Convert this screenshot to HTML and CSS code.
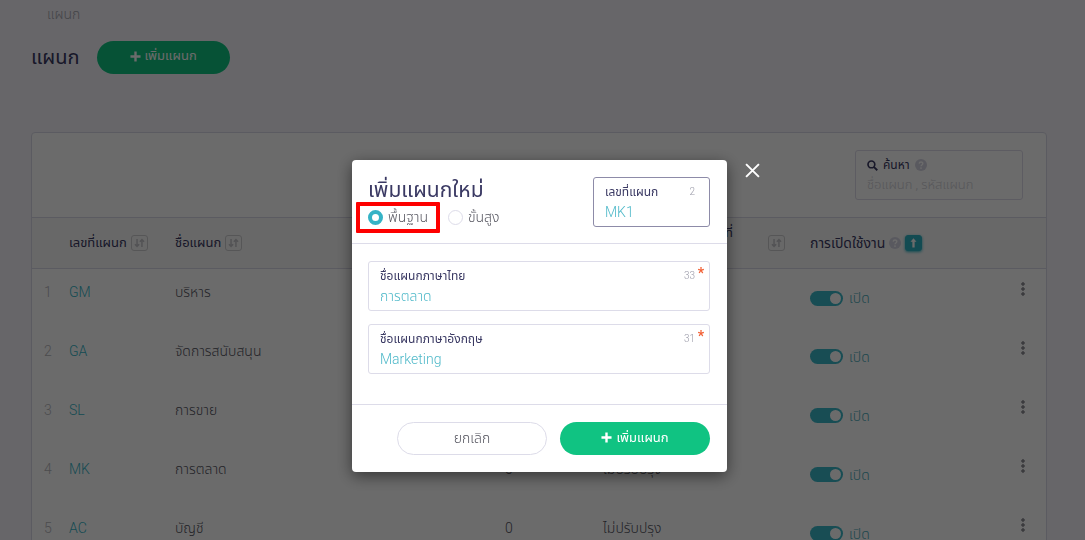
FILE: index.html
```html
<!DOCTYPE html>
<html lang="th">
<head>
    <meta charset="UTF-8">
    <meta name="viewport" content="width=device-width, initial-scale=1.0">
    <title>แผนก</title>
    <link rel="stylesheet" href="styles.css">
</head>
<body>
    <!-- shared icons -->
    <svg class="sprite" aria-hidden="true">
        <symbol id="icon-plus" viewBox="0 0 12 12"><path d="M6 .5v11M.5 6h11" fill="none" stroke="currentColor" stroke-width="2.6"/></symbol>
        <symbol id="icon-sort" viewBox="0 0 16 16"><path d="M5.2 3.5v8M2.8 9.3l2.4 2.7 2.4-2.7M10.8 12.5v-8M8.4 6.7L10.8 4l2.4 2.7" fill="none" stroke="currentColor" stroke-width="1.7"/></symbol>
        <symbol id="icon-up" viewBox="0 0 16 16"><path d="M8 2.5l3.4 4.2H9.3v6.3H6.7V6.7H4.6z" fill="currentColor"/></symbol>
        <symbol id="icon-search" viewBox="0 0 12 12"><circle cx="4.8" cy="4.8" r="3.7" fill="none" stroke="currentColor" stroke-width="1.8"/><path d="M7.4 7.4l3.8 3.8" stroke="currentColor" stroke-width="2"/></symbol>
        <symbol id="icon-more" viewBox="0 0 4 15"><g fill="none" stroke="currentColor" stroke-width="1"><circle cx="2" cy="2" r="1.2"/><circle cx="2" cy="7" r="1.2"/><circle cx="2" cy="12" r="1.2"/></g></symbol>
        <symbol id="icon-help" viewBox="0 0 12 12"><circle cx="6" cy="6" r="6" fill="currentColor"/><path d="M4.2 4.6c.1-2.2 3.7-2.1 3.6 0C7.8 6 6 5.9 6 7.3" fill="none" stroke="#fff" stroke-width="1.4"/><circle cx="6" cy="9.1" r=".9" fill="#fff"/></symbol>
    </svg>

    <div class="page">
        <nav class="breadcrumb">แผนก</nav>
        <header class="page-head">
            <h1>แผนก</h1>
            <button class="btn btn-add btn-small" type="button"><svg class="plus"><use href="#icon-plus"/></svg>เพิ่มแผนก</button>
        </header>

        <section class="card">
            <div class="toolbar">
                <div class="field search">
                    <label for="search"><svg class="icon"><use href="#icon-search"/></svg>ค้นหา<svg class="help"><use href="#icon-help"/></svg></label>
                    <input type="text" id="search" placeholder="ชื่อแผนก , รหัสแผนก">
                </div>
            </div>
            <table>
                <colgroup>
                    <col class="col-no"><col class="col-code"><col><col class="col-update"><col class="col-cost"><col class="col-active"><col class="col-menu">
                </colgroup>
                <thead>
                    <tr>
                        <th></th>
                        <th><div class="head">เลขที่แผนก<button class="sort" type="button" aria-label="sort"><svg><use href="#icon-sort"/></svg></button></div></th>
                        <th><div class="head">ชื่อแผนก<button class="sort" type="button" aria-label="sort"><svg><use href="#icon-sort"/></svg></button></div></th>
                        <th></th>
                        <th><div class="head head-wide"><span>จำนวนเจ้าหน้าที่<br>ปรับปรุง</span><button class="sort" type="button" aria-label="sort"><svg><use href="#icon-sort"/></svg></button></div></th>
                        <th><div class="head head-active">การเปิดใช้งาน<svg class="help"><use href="#icon-help"/></svg><button class="sort sort-on" type="button" aria-label="sort"><svg><use href="#icon-up"/></svg></button></div></th>
                        <th></th>
                    </tr>
                </thead>
                <tbody>
                    <tr>
                        <td class="no">1</td><td><a href="#">GM</a></td><td>บริหาร</td><td class="count">0</td><td>ไม่ปรับปรุง</td>
                        <td><label class="switch"><input type="checkbox" checked>เปิด</label></td>
                        <td class="menu"><button type="button" aria-label="menu"><svg><use href="#icon-more"/></svg></button></td>
                    </tr>
                    <tr>
                        <td class="no">2</td><td><a href="#">GA</a></td><td>จัดการสนับสนุน</td><td class="count">0</td><td>ไม่ปรับปรุง</td>
                        <td><label class="switch"><input type="checkbox" checked>เปิด</label></td>
                        <td class="menu"><button type="button" aria-label="menu"><svg><use href="#icon-more"/></svg></button></td>
                    </tr>
                    <tr>
                        <td class="no">3</td><td><a href="#">SL</a></td><td>การขาย</td><td class="count">0</td><td>ไม่ปรับปรุง</td>
                        <td><label class="switch"><input type="checkbox" checked>เปิด</label></td>
                        <td class="menu"><button type="button" aria-label="menu"><svg><use href="#icon-more"/></svg></button></td>
                    </tr>
                    <tr>
                        <td class="no">4</td><td><a href="#">MK</a></td><td>การตลาด</td><td class="count">0</td><td>ไม่ปรับปรุง</td>
                        <td><label class="switch"><input type="checkbox" checked>เปิด</label></td>
                        <td class="menu"><button type="button" aria-label="menu"><svg><use href="#icon-more"/></svg></button></td>
                    </tr>
                    <tr>
                        <td class="no">5</td><td><a href="#">AC</a></td><td>บัญชี</td><td class="count">0</td><td>ไม่ปรับปรุง</td>
                        <td><label class="switch"><input type="checkbox" checked>เปิด</label></td>
                        <td class="menu"><button type="button" aria-label="menu"><svg><use href="#icon-more"/></svg></button></td>
                    </tr>
                </tbody>
            </table>
        </section>
    </div>

    <div class="overlay">
        <form class="modal" role="dialog" aria-labelledby="modal-title">
            <button class="close" type="button" aria-label="close"><svg viewBox="0 0 14 14"><path d="M1 1l12 12M13 1L1 13" stroke="#fff" stroke-width="1.8"/></svg></button>
            <div class="modal-head">
                <div class="modal-intro">
                    <h2 id="modal-title">เพิ่มแผนกใหม่</h2>
                    <div class="modes">
                        <label class="mode highlight"><input type="radio" name="mode" checked>พื้นฐาน</label>
                        <label class="mode"><input type="radio" name="mode">ขั้นสูง</label>
                    </div>
                </div>
                <div class="field field-code">
                    <label for="code">เลขที่แผนก<span class="left">2</span></label>
                    <input type="text" id="code" value="MK1">
                </div>
            </div>
            <div class="modal-body">
                <div class="field required">
                    <label for="name-th">ชื่อแผนกภาษาไทย<span class="left">33</span></label>
                    <input type="text" id="name-th" value="การตลาด">
                </div>
                <div class="field required">
                    <label for="name-en">ชื่อแผนกภาษาอังกฤษ<span class="left">31</span></label>
                    <input type="text" id="name-en" value="Marketing">
                </div>
            </div>
            <div class="modal-foot">
                <button class="btn btn-cancel" type="button">ยกเลิก</button>
                <button class="btn btn-add" type="button"><svg class="plus"><use href="#icon-plus"/></svg>เพิ่มแผนก</button>
            </div>
        </form>
    </div>
</body>
</html>
```
FILE: styles.css
```css
* {
    box-sizing: border-box;
}
body {
    margin: 0;
    height: 100vh;
    overflow: hidden;
    background-color: #f5f4fb;
    font-family: Roboto, "Noto Sans Thai", "Noto Sans", sans-serif;
    font-size: 14px;
    font-weight: 300;
    line-height: 20px;
    color: #55555f;
}
button, input {
    font: inherit;
    color: inherit;
}
button {
    padding: 0;
    border: none;
    background: none;
    cursor: pointer;
}
a {
    color: #35b3c6;
    text-decoration: none;
}
h1, h2 {
    margin: 0;
    font-weight: 400;
    color: #3a3963;
}
.sprite {
    display: none;
}
.page {
    padding: 4px 38px 0 31px;
}
.breadcrumb {
    padding-left: 16px;
    color: #a5a5ad;
}
.page-head {
    display: flex;
    align-items: center;
    gap: 17px;
    margin: 16px 0 58px;
}
h1 {
    font-size: 20px;
    line-height: 34px;
}
.btn {
    display: flex;
    align-items: center;
    justify-content: center;
    width: 150px;
    height: 33px;
    padding-bottom: 2px;
    border-radius: 17px;
}
.btn-small {
    width: 133px;
}
.btn-add {
    gap: 4px;
    background-color: #10c382;
    color: #fff;
    font-size: 13px;
    font-weight: 400;
}
.btn-cancel {
    border: 1px solid #dddce9;
}
.plus {
    width: 11px;
    height: 11px;
}
.card {
    border: 1px solid #d9d8e6;
    border-radius: 4px;
    background-color: #fff;
}
.toolbar {
    display: flex;
    justify-content: flex-end;
    padding: 17px 23px;
}

/* boxed inputs */
.field {
    position: relative;
    height: 50px;
    padding: 4px 11px;
    border: 1px solid #dddce9;
    border-radius: 3px;
}
.field label {
    display: flex;
    align-items: center;
    font-size: 12px;
    font-weight: 400;
    color: #3a3963;
}
.field input {
    display: block;
    width: 100%;
    height: 20px;
    padding: 0;
    border: none;
    outline: none;
    background: none;
    color: #4fb9c9;
}
.search {
    width: 168px;
}
.search label {
    gap: 5px;
}
.search input {
    font-size: 13px;
}
.search input::placeholder {
    color: #cfcfd6;
}
.left {
    margin-left: auto;
    padding-right: 3px;
    font-size: 10px;
    font-weight: 300;
    color: #9a9aa8;
}
.required::after {
    content: "*";
    position: absolute;
    top: 1px;
    right: 5px;
    font-size: 14px;
    font-weight: 700;
    color: #f26035;
}
.icon {
    width: 11px;
    height: 11px;
}
.help {
    width: 12px;
    height: 12px;
    color: #d5d4e2;
}

/* table */
table {
    width: 100%;
    table-layout: fixed;
    border-collapse: collapse;
}
.col-no { width: 37px; }
.col-code { width: 106px; }
.col-update { width: 108px; }
.col-cost { width: 207px; }
.col-active { width: 190px; }
.col-menu { width: 46px; }
th {
    height: 51px;
    padding: 0;
    border: solid #d9d8e6;
    border-width: 1px 0;
    background-color: #f8f8f8;
    font-size: 13px;
    font-weight: 400;
    text-align: left;
    color: #3a3963;
}
.head {
    display: flex;
    align-items: center;
    gap: 4px;
    white-space: nowrap;
}
.head-wide {
    justify-content: flex-end;
    gap: 35px;
    padding-right: 25px;
    text-align: left;
}
.head-active {
    font-size: 14px;
}
.sort {
    width: 17px;
    height: 16px;
    border: 1px solid #cccccf;
    border-radius: 3px;
    color: #c4c4c9;
}
.sort svg {
    display: block;
    width: 100%;
    height: 100%;
}
.sort-on {
    border-color: #2fb3c4;
    background-color: #2fb3c4;
    color: #fff;
    box-shadow: 0 1px 3px #2fb3c4;
}
td {
    height: 59px;
    padding: 13px 0 0;
    vertical-align: top;
}
.no {
    padding-left: 12px;
    color: #b5b5ba;
}
.count {
    padding-left: 10px;
}
.switch {
    display: flex;
    align-items: center;
    gap: 6px;
    padding-top: 6px;
    color: #4aa9b8;
}
.switch input {
    appearance: none;
    width: 33px;
    height: 15px;
    margin: 0;
    padding: 2px;
    border-radius: 8px;
    background-color: #3ab7c8;
}
.switch input::before {
    content: "";
    display: block;
    width: 11px;
    height: 11px;
    margin-left: auto;
    border-radius: 50%;
    background-color: #fff;
}
.menu {
    text-align: center;
}
.menu svg {
    display: block;
    width: 4px;
    height: 15px;
}

/* dialog */
.overlay {
    position: fixed;
    inset: 0;
    display: flex;
    align-items: flex-start;
    justify-content: center;
    padding: 160px 6px 0 0;
    background-color: rgba(0, 0, 0, 0.58);
}
.modal {
    position: relative;
    width: 375px;
    border-radius: 4px;
    background-color: #fff;
    box-shadow: 0 4px 16px rgba(0, 0, 0, 0.5);
}
.close {
    position: absolute;
    top: 3px;
    right: -33px;
    width: 15px;
    height: 15px;
}
.close svg {
    display: block;
}
.modal-head {
    display: flex;
    justify-content: space-between;
    padding: 17px 17px 16px 16px;
    border-bottom: 1px solid #dddce9;
}
h2 {
    font-size: 21px;
    line-height: 26px;
}
.modes {
    display: flex;
    gap: 20px;
    padding-top: 4px;
}
.mode {
    position: relative;
    display: flex;
    align-items: center;
    gap: 5px;
}
.mode input {
    appearance: none;
    width: 15px;
    height: 15px;
    margin: 0;
    border: 1px solid #dddce9;
    border-radius: 50%;
}
.mode input:checked {
    border: 4px solid #35b3c6;
}
.highlight::after {
    content: "";
    position: absolute;
    inset: -5px -12px -6px -12px;
    border: 4px solid #fe0000;
    border-radius: 1px;
}
.field-code {
    width: 117px;
    border-color: #8d8ba8;
}
.modal-body {
    display: flex;
    flex-direction: column;
    gap: 13px;
    padding: 17px 17px 30px 16px;
}
.modal-foot {
    display: flex;
    justify-content: flex-end;
    gap: 13px;
    padding: 17px;
    border-top: 1px solid #dddce9;
}
```
